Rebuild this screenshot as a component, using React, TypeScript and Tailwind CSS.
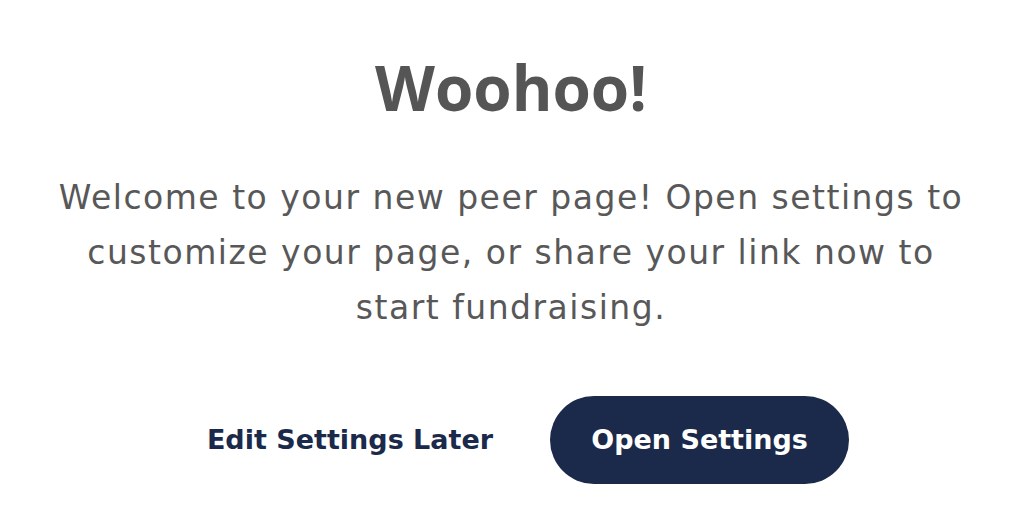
export default function App() {
  return (
    <div className="min-h-screen bg-white flex justify-center pl-[8px]">
      <div className="w-[920px] flex flex-col items-center pt-[47px]">
        <h1 className="font-['Open_Sans',sans-serif] text-[62px] leading-[80px] font-bold text-[#555555]">Woohoo!</h1>
        <p className="mt-[43px] text-center font-['DejaVu_Sans',sans-serif] text-[33px] leading-[55px] tracking-[1.5px] text-[#585858]">
          Welcome to your new peer page! Open settings to customize your page, or share your link now to start fundraising.
        </p>
        <div className="mt-[61px] ml-[34px] flex items-center gap-[57px] font-['DejaVu_Sans',sans-serif]">
          <button className="text-[27px] font-bold text-[#1b2a4a]">Edit Settings Later</button>
          <button className="w-[299px] h-[88px] rounded-full bg-[#1b2a4a] text-white text-[27px] font-bold">
            Open Settings
          </button>
        </div>
      </div>
    </div>
  );
}
